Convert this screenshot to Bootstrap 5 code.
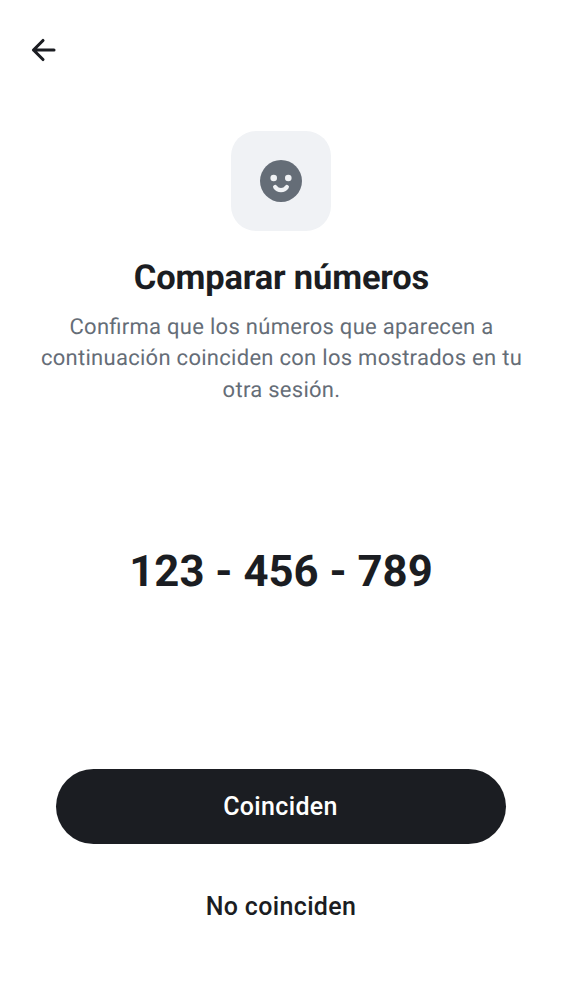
<!DOCTYPE html>
<html lang="es">
<head>
<meta charset="utf-8">
<meta name="viewport" content="width=device-width, initial-scale=1">
<title>Comparar números</title>
<link href="https://cdn.jsdelivr.net/npm/bootstrap@5.3.0/dist/css/bootstrap.min.css" rel="stylesheet">
<style>
body{font-family:Roboto,sans-serif;color:#1b1d22;background:#fff;text-rendering:geometricPrecision}
.screen{height:1000px}
.topbar{height:100px;padding-left:31px}
.back{line-height:0;color:#1b1d22}
.tile{width:100px;height:100px;border-radius:25px;background:#f0f2f5;margin-top:31px}
.title{font-size:34.5px;line-height:42px;font-weight:700;letter-spacing:-.17px;margin-top:26px;padding-left:1px}
.intro{font-size:22px;line-height:31.25px;letter-spacing:.28px;font-feature-settings:"liga" 1;color:#656d77;margin-top:13px;padding-left:1px}
.digits{font-size:43.7px;line-height:56px;font-weight:700;margin-top:136.9px}
.action{width:450px;height:75px;font-size:25px;font-weight:500;letter-spacing:.34px;border:0}
.action-main,.action-main:hover{background:#1b1d22;color:#fff;padding-right:13px}
.action-alt,.action-alt:hover{color:#1b1d22}
.actions{margin-bottom:56px;gap:25px}
</style>
</head>
<body>
<main class="screen d-flex flex-column overflow-hidden">
<header class="topbar d-flex align-items-center">
<button class="btn border-0 p-0 back" aria-label="Atrás"><svg width="25" height="24" viewBox="0 0 25 24" fill="none" stroke="currentColor" stroke-width="3.1" stroke-linecap="round" stroke-linejoin="round"><path d="M23 12H2.5M12 2.5 2.5 12 12 21.5"/></svg></button>
</header>
<section class="d-flex flex-column align-items-center text-center flex-grow-1">
<div class="tile d-flex align-items-center justify-content-center flex-shrink-0">
<svg width="42" height="42" viewBox="0 0 42 42"><circle cx="21" cy="21" r="21" fill="#656d77"/><circle cx="13.7" cy="18" r="3.3" fill="#f0f2f5"/><circle cx="28.3" cy="18" r="3.3" fill="#f0f2f5"/><path d="M15.1 27C18 31.2 24 31.2 26.9 27" fill="none" stroke="#f0f2f5" stroke-width="4.1" stroke-linecap="round"/></svg>
</div>
<h1 class="title mb-0">Comparar números</h1>
<p class="intro mb-0">Confirma que los números que aparecen a<br>continuación coinciden con los mostrados en tu<br>otra sesión.</p>
<div class="digits">123 - 456 - 789</div>
</section>
<footer class="actions d-flex flex-column align-items-center">
<button class="btn rounded-pill action action-main">Coinciden</button>
<button class="btn rounded-pill action action-alt">No coinciden</button>
</footer>
</main>
<script src="https://cdn.jsdelivr.net/npm/bootstrap@5.3.0/dist/js/bootstrap.bundle.min.js"></script>
</body>
</html>
